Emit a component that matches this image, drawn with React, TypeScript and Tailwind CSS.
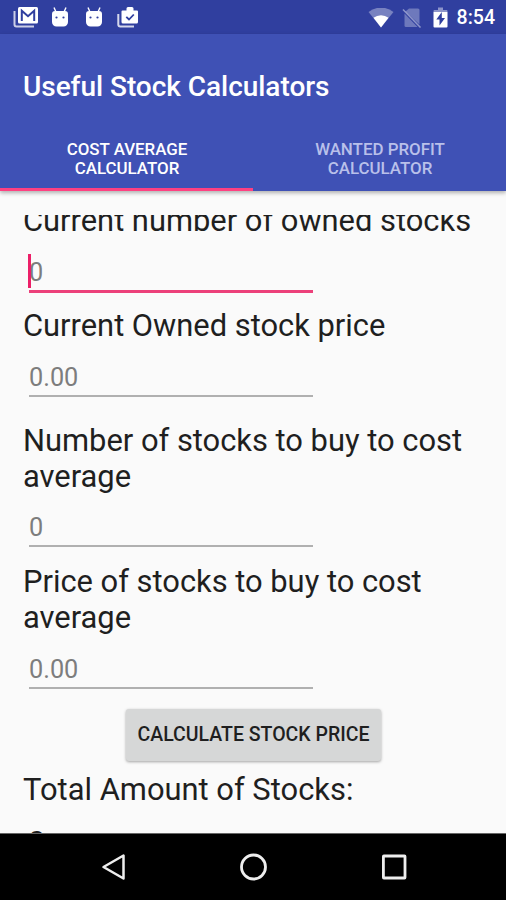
import { useState } from 'react';
import clsx from 'clsx';

interface FieldProps {
  label: string;
  hint: string;
  focused?: boolean;
  className?: string;
}

const fields: FieldProps[] = [
  { label: 'Current number of owned stocks', hint: '0', focused: true, className: 'h-[90px] mb-[15px]' },
  { label: 'Current Owned stock price', hint: '0.00', className: 'h-[89px] mb-[26px]' },
  { label: 'Number of stocks to buy to cost average', hint: '0', className: 'h-[124px] mb-[17px]' },
  { label: 'Price of stocks to buy to cost average', hint: '0.00', className: 'h-[125px] mb-[20px]' },
];

const tabs = ['Cost Average Calculator', 'Wanted Profit Calculator'];

function GmailIcon() {
  return (
    <svg width="26" height="22" viewBox="0 0 26 22" fill="none">
      <path d="M1.5 5v13.5a2 2 0 0 0 2 2H21" stroke="#fff" strokeOpacity=".75" strokeWidth="2" />
      <rect x="5" y="1" width="20" height="16.5" rx="1.5" fill="#fff" />
      <path d="M8.8 15V4.8l6.2 5.4 6.2-5.4V15" stroke="#303f9f" strokeWidth="2" />
    </svg>
  );
}

function DroidIcon() {
  return (
    <svg width="18" height="21" viewBox="0 0 18 21" fill="none">
      <path d="M3 .5l2 4.5M15 .5l-2 4.5" stroke="#fff" strokeWidth="1.4" />
      <path d="M1 7a3 3 0 0 1 3-3h10a3 3 0 0 1 3 3v8a4.5 4.5 0 0 1-4.5 4.5h-7A4.5 4.5 0 0 1 1 15z" fill="#fff" />
      <circle cx="5.5" cy="10.5" r="1.1" fill="#303f9f" />
      <circle cx="12.5" cy="10.5" r="1.1" fill="#303f9f" />
    </svg>
  );
}

function TaskIcon() {
  return (
    <svg width="22" height="22" viewBox="0 0 22 22" fill="none">
      <path d="M1.3 8v10.5a2 2 0 0 0 2 2H17" stroke="#fff" strokeOpacity=".8" strokeWidth="2" />
      <path
        d="M5.5 4.5h4v-2A1.5 1.5 0 0 1 11 1h4a1.5 1.5 0 0 1 1.5 1.5v2H20a1 1 0 0 1 1 1V16a1.5 1.5 0 0 1-1.5 1.5H6A1.5 1.5 0 0 1 4.5 16V5.5a1 1 0 0 1 1-1z"
        fill="#fff"
      />
      <path d="M9.3 10.8l2.7 2.7 4.8-5" stroke="#303f9f" strokeWidth="1.8" />
    </svg>
  );
}

function WifiIcon() {
  return (
    <svg width="26" height="20" viewBox="0 0 26 20">
      <path d="M13 19.5L.5 4a20 20 0 0 1 25 0z" fill="#fff" fillOpacity=".35" />
      <path d="M13 19.5L5.5 9.8a12.5 12.5 0 0 1 15 0z" fill="#fff" />
    </svg>
  );
}

function NoSimIcon() {
  return (
    <svg width="20" height="20" viewBox="0 0 20 20" fill="none">
      <path d="M7 .5h9A1.5 1.5 0 0 1 17.5 2v14.5L3.5 3.6z" fill="#fff" fillOpacity=".3" />
      <path d="M2.5 5.5L15.5 19H4a1.5 1.5 0 0 1-1.5-1.5z" fill="#fff" fillOpacity=".3" />
      <path d="M1 1.5l17.5 18" stroke="#fff" strokeOpacity=".45" strokeWidth="1.5" />
    </svg>
  );
}

function BatteryIcon() {
  return (
    <svg width="15" height="21" viewBox="0 0 15 21">
      <path d="M5 .5h5V3h3.5a1 1 0 0 1 1 1v1H.5V4a1 1 0 0 1 1-1H5z" fill="#fff" fillOpacity=".45" />
      <path d="M.5 5h14v14.5a1 1 0 0 1-1 1h-12a1 1 0 0 1-1-1z" fill="#fff" />
      <path d="M8.8 5L3.3 12.5h3.2v6L12 11H8.8z" fill="#303f9f" />
    </svg>
  );
}

function StatusBar() {
  return (
    <div className="flex h-[34px] shrink-0 items-center justify-between bg-[#303f9f] pl-[13px] pr-[11px]">
      <div className="flex items-center">
        <GmailIcon />
        <div className="ml-[12px]"><DroidIcon /></div>
        <div className="ml-[16px]"><DroidIcon /></div>
        <div className="ml-[14px]"><TaskIcon /></div>
      </div>
      <div className="flex items-center pt-[1px]">
        <WifiIcon />
        <div className="ml-[8px]"><NoSimIcon /></div>
        <div className="ml-[11px]"><BatteryIcon /></div>
        <span className="ml-[9px] pt-[1px] text-[19.5px] font-medium leading-[34px] text-white">8:54</span>
      </div>
    </div>
  );
}

function Field({ label, hint, focused, className }: FieldProps) {
  return (
    <div className={clsx('flex flex-col justify-between', className)}>
      <label className="text-[30.9px] leading-[36px] tracking-[-0.015px] text-[#1f1f1f]">{label}</label>
      <div
        className={clsx(
          'relative ml-[6px] w-[284px] pb-[2px]',
          focused ? 'border-b-[3px] border-[#ec407a]' : 'border-b-2 border-[#b0b0b0]'
        )}
      >
        <input
          placeholder={hint}
          className="block h-[30px] w-full bg-transparent text-[25.3px] leading-[30px] outline-none placeholder:text-[#7d7d7d]"
        />
        {focused && <span className="absolute -left-px -top-[4px] h-[34px] w-[3px] bg-[#ec1f68]" />}
      </div>
    </div>
  );
}

function NavBar() {
  return (
    <div className="flex h-[67px] shrink-0 items-center justify-between border-t border-[#666] bg-black pl-[99px] pr-[98px]">
      <svg width="28" height="30" viewBox="0 0 28 30" fill="none" stroke="#eee" strokeWidth="2.5">
        <path d="M24.5 3.5v23L4.5 15z" strokeLinejoin="round" />
      </svg>
      <svg width="30" height="30" viewBox="0 0 30 30" fill="none" stroke="#eee" strokeWidth="2.8">
        <circle cx="14.5" cy="15" r="12" />
      </svg>
      <svg width="28" height="30" viewBox="0 0 28 30" fill="none" stroke="#eee" strokeWidth="2.8">
        <rect x="3.4" y="4" width="21.6" height="22" rx=".5" />
      </svg>
    </div>
  );
}

export default function App() {
  const [activeTab, setActiveTab] = useState(0);

  return (
    <div className="flex h-[900px] w-[506px] flex-col overflow-hidden bg-[#fafafa] font-['Roboto',sans-serif]">
      <StatusBar />

      <header className="z-10 flex h-[157px] shrink-0 flex-col bg-[#3f51b5] shadow-[0_2px_4px_rgba(0,0,0,0.3)]">
        <h1 className="pl-[23px] pt-[36px] text-[28px] font-medium leading-[34px] tracking-[-0.04px] text-white">
          Useful Stock Calculators
        </h1>
        <div className="mt-auto flex">
          {tabs.map((tab, index) => (
            <button
              key={tab}
              onClick={() => setActiveTab(index)}
              className={clsx(
                'flex h-[67px] w-1/2 justify-center border-b-[3px] pl-[56px] pr-[55px] pt-[16px] text-[16.9px] font-medium uppercase leading-[19px]',
                index === activeTab ? 'border-[#ff4081] text-white' : 'border-transparent text-[#b9c0ea]'
              )}
            >
              {tab}
            </button>
          ))}
        </div>
      </header>

      <main className="mt-[24px] min-h-0 flex-1 overflow-hidden px-[23px]">
        <div className="-mt-[12px] flex flex-col">
          {fields.map((field) => (
            <Field key={field.label} {...field} />
          ))}
          <button className="ml-[103px] h-[52px] w-[255px] shrink-0 rounded-[3px] bg-[#d6d7d7] text-[19.5px] font-medium uppercase text-[#1f1f1f] shadow-[0_1px_3px_rgba(0,0,0,0.35)]">
            Calculate Stock Price
          </button>
          <p className="mt-[11px] text-[30.9px] leading-[36px] text-[#1f1f1f]">Total Amount of Stocks:</p>
          <p className="ml-[5px] mt-[17px] text-[30.9px] leading-[36px] text-[#1f1f1f]">0</p>
        </div>
      </main>

      <NavBar />
    </div>
  );
}
